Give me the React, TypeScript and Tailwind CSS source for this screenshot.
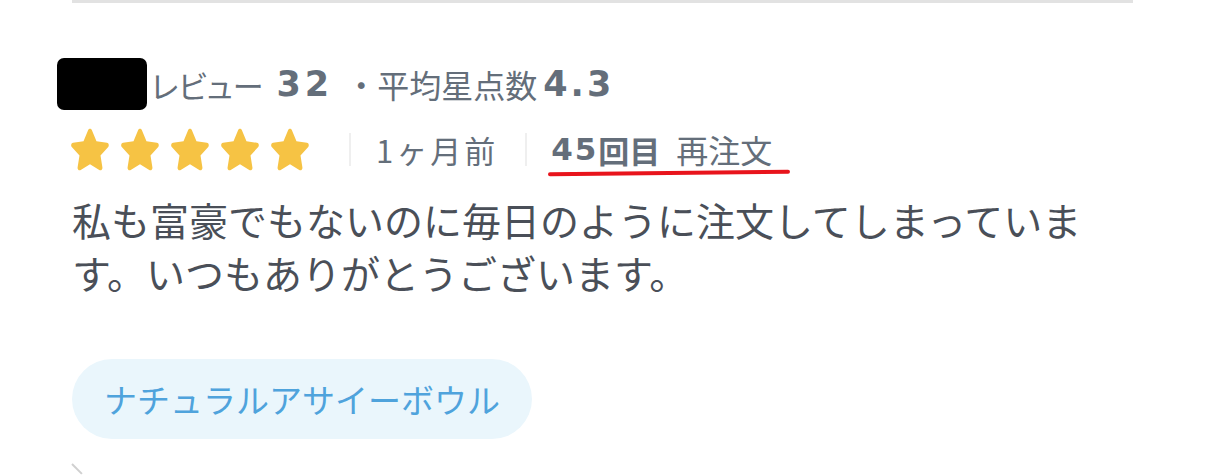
import React from "react";

const Star = () => (
  <svg width="42" height="48" viewBox="0 0 24 24" preserveAspectRatio="none" className="shrink-0">
    <path
      d="M12 1.9c.5 0 .9.3 1.1.7l2.6 5.5 6 .8c1 .1 1.4 1.4.7 2.1l-4.4 4.2 1.1 6c.2 1-.9 1.8-1.8 1.3L12 19.6l-5.3 2.9c-.9.5-2-.3-1.8-1.3l1.1-6-4.4-4.2c-.7-.7-.3-2 .7-2.1l6-.8 2.6-5.5c.2-.4.6-.7 1.1-.7z"
      fill="#f6c344"
    />
  </svg>
);

const JP = '"Noto Sans CJK JP", "Noto Sans", sans-serif';
const NUM = '"DejaVu Sans", "Liberation Sans", sans-serif';

export default function App() {
  return (
    <div
      className="w-[1206px] h-[476px] bg-white overflow-hidden relative"
      style={{ fontFamily: JP }}
    >
      <div className="ml-[72px] w-[1061px] h-[3px] bg-[#e2e2e2]" />
      <div className="pl-[72px] flex flex-col">
        {/* header row */}
        <div className="flex items-center mt-[55px] h-[52px] text-[#646e7a] leading-none whitespace-nowrap">
          <div className="-ml-[15px] w-[90px] h-[52px] bg-black rounded-[7px]" />
          <span className="ml-[4px] text-[31px] [font-feature-settings:'palt']">レビュー</span>
          <span className="ml-[13px] text-[35px] font-bold tracking-[4px]" style={{ fontFamily: NUM }}>
            3<span className="tracking-normal">2</span>
          </span>
          <span className="ml-[16px] text-[32px]">・</span>
          <span className="text-[32px]">平均星点数</span>
          <span className="ml-[6px] text-[35px] font-bold tracking-[3px]" style={{ fontFamily: NUM }}>
            4.<span className="tracking-normal">3</span>
          </span>
        </div>
        {/* rating row */}
        <div className="flex items-center mt-[15px] h-[48px]">
          <div className="flex gap-[8px] -ml-[3px]">
            <Star />
            <Star />
            <Star />
            <Star />
            <Star />
          </div>
          <div className="ml-[38px] w-[2px] h-[33px] bg-[#efefef]" />
          <div className="ml-[25px] flex items-center text-[31px] leading-none text-[#646e7a] whitespace-nowrap">
            <span className="tracking-[3px]">1ヶ月</span>
            <span>前</span>
          </div>
          <div className="ml-[30px] w-[2px] h-[33px] bg-[#efefef]" />
          <div className="ml-[24px] relative flex items-center text-[31px] leading-none text-[#646e7a] whitespace-nowrap">
            <span className="font-bold text-[31px] tracking-[2px]" style={{ fontFamily: NUM }}>45</span>
            <span className="font-bold">回目</span>
            <span className="ml-[16px] text-[32px]">再注文</span>
            <span className="absolute -left-[3px] -right-[18px] top-[38px] h-[4px] bg-[#e8141c] rounded-full -rotate-[0.6deg]" />
          </div>
        </div>
        {/* body */}
        <p className="mt-[20px] w-[1040px] text-[39px] leading-[53px] text-[#4a4f58]">
          私も富豪でもないのに毎日のように注文してしまっています。いつもありがとうございます。
        </p>
        {/* tag */}
        <div className="mt-[60px] self-start h-[80px] px-[32px] rounded-full bg-[#eaf6fc] flex items-center text-[33px] leading-none text-[#4fa3dc] whitespace-nowrap">
          ナチュラルアサイーボウル
        </div>
      </div>
      <div className="absolute left-[72px] top-[463px] w-[14px] h-[2px] bg-[#d0d0d0] rotate-45 origin-left" />
    </div>
  );
}
